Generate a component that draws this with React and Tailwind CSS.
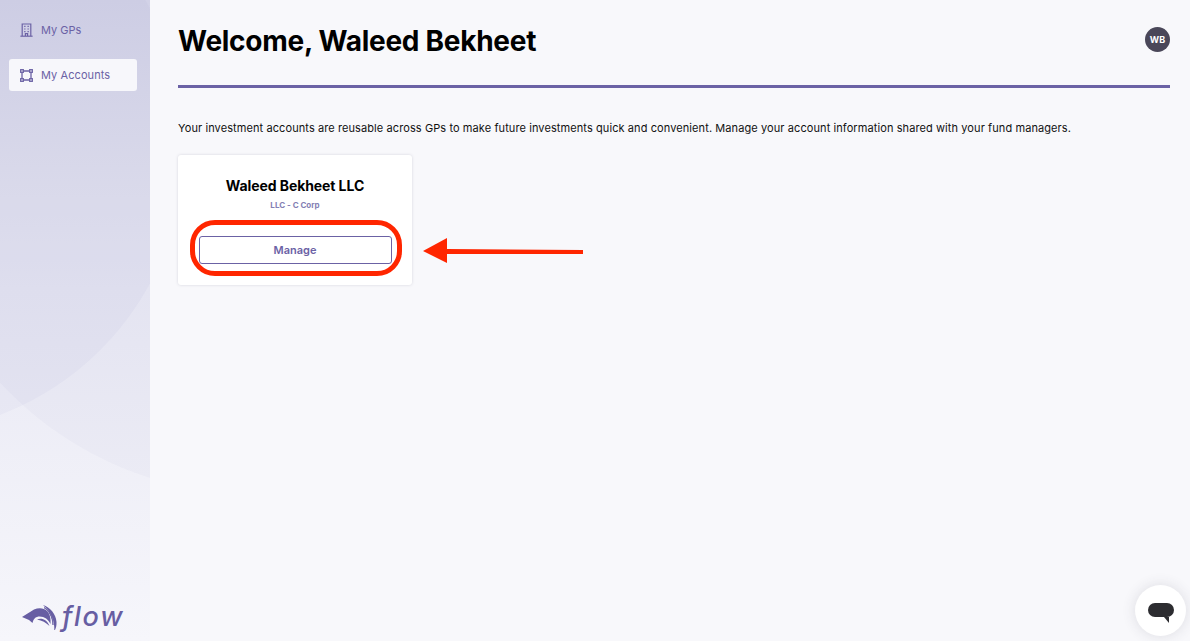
const inter = { fontFamily: '"Inter", "Liberation Sans", sans-serif' };

function BuildingIcon() {
  return (
    <svg width="13" height="14" viewBox="0 0 13 14" fill="none" stroke="#6b62a5" strokeWidth="1.2">
      <path d="M2.2 13V1h8.6v12" />
      <path d="M0.4 13.2h12.2" />
      <path d="M4.2 3.4h1.3M7.5 3.4h1.3M4.2 6h1.3M7.5 6h1.3M4.2 8.6h1.3M7.5 8.6h1.3" />
      <path d="M5.4 13v-2.4h2.2V13" />
    </svg>
  );
}

function AccountsIcon() {
  return (
    <svg width="13" height="13" viewBox="0 0 13 13" fill="none" stroke="#6b62a5" strokeWidth="1.3">
      <rect x="0.7" y="0.7" width="2.6" height="2.6" />
      <rect x="9.7" y="0.7" width="2.6" height="2.6" />
      <rect x="0.7" y="9.7" width="2.6" height="2.6" />
      <rect x="9.7" y="9.7" width="2.6" height="2.6" />
      <path d="M3.3 2h6.4M3.3 11h6.4M2 3.3v6.4M11 3.3v6.4" />
    </svg>
  );
}

function LogoMark() {
  return (
    <svg width="35" height="25" viewBox="0 0 35 25" fill="#675ea3">
      <path d="M0 12 L12 4.5 C17 2.5 22 3 25 6 C28 9 29 14 28.5 19 C26.5 14.5 22.5 11.5 17.5 11.5 C14 11.5 11.5 13.5 10.5 18 L7 15 Z" />
      <path d="M15 14.5 C20 12.5 25 15 27.5 21 C24 17.5 20 15.5 15 14.5 Z" />
      <path d="M21 0 C28 2 34 9 34.5 17 C34.7 20 34 23 33 25 L32.3 25 C32.8 16 29 7 21 0 Z" />
      <path d="M22 2.6 C27 5 31 11 31 20 C30.6 12 27 6 22 2.6 Z" stroke="#675ea3" strokeWidth="0.8" />
    </svg>
  );
}

export default function App() {
  return (
    <div className="flex h-[641px] w-[1190px] overflow-hidden bg-[#f8f8fb]" style={inter}>
      <aside className="relative flex h-full w-[150px] shrink-0 flex-col overflow-hidden bg-gradient-to-b from-[#d6d6ea] via-[#e9e9f4] via-45% to-[#f6f6fb] px-[9px] pt-[14px]">
        <div className="absolute left-[-391px] top-[-142px] h-[576px] w-[576px] rounded-full bg-[#565aa8]/[0.035]" />
        <div className="absolute left-[-91px] top-[-196px] h-[690px] w-[690px] rounded-full bg-[#565aa8]/[0.03]" />
        <div className="relative flex h-[32px] items-center gap-[8px] pl-[11px] text-[11px] text-[#6b62a5]">
          <BuildingIcon />
          <span>My GPs</span>
        </div>
        <div className="relative mt-[13px] flex h-[32px] w-[128px] items-center gap-[8px] rounded-[3px] bg-[#f7f7fb] pl-[11px] text-[11px] tracking-[0.08px] text-[#6b62a5]">
          <AccountsIcon />
          <span>My Accounts</span>
        </div>
        <div className="relative mt-auto mb-[11px] flex items-center gap-[5px] pl-[13px]">
          <LogoMark />
          <span className="text-[27px] leading-[26px] font-medium tracking-[1.7px] text-[#675ea3] italic">flow</span>
        </div>
      </aside>

      <main className="relative flex-1 pl-[28px] pr-[20px]">
        <header className="flex h-[85px] items-start justify-between pt-[22px]">
          <h1 className="text-[28px] leading-[38px] font-bold tracking-[-0.27px] text-black">Welcome, Waleed Bekheet</h1>
          <div className="mt-[5px] flex h-[25px] w-[25px] items-center justify-center rounded-full bg-[#4a4759] text-[9px] font-bold text-white">WB</div>
        </header>
        <div className="h-[3px] bg-[#6b62a5]" />
        <p className="mt-[32px] text-[11px] leading-[16px] tracking-[0.09px] whitespace-nowrap text-[#111]">
          Your investment accounts are reusable across GPs to make future investments quick and convenient. Manage your account information shared with your fund managers.
        </p>

        <div className="relative mt-[19px] flex h-[130px] w-[234px] flex-col items-center rounded-[3px] bg-white pt-[22px] shadow-[0_0_3px_rgba(60,60,90,0.18)]">
          <div className="text-[14px] leading-[18px] font-bold tracking-[-0.08px] text-black">Waleed Bekheet LLC</div>
          <div className="mt-[4px] text-[8px] leading-[12px] font-bold text-[#8480b4]">LLC - C Corp</div>
          <button className="mt-[25px] h-[28px] w-[193px] rounded-[3px] border border-[#6b62a5] bg-white text-[11px] font-semibold text-[#6b62a5]">Manage</button>
          <div className="absolute left-[12px] top-[65px] h-[56px] w-[212px] rounded-[25px] border-[5px] border-[#ff2600] blur-[0.4px]" />
        </div>

        <svg className="absolute left-[272px] top-[236px]" width="164" height="30" viewBox="0 0 164 30" fill="#ff2600">
          <path d="M1 15 L25 2 V13 L161 14 V18 L25 18 V27 Z" />
        </svg>

        <div className="absolute left-[985px] top-[585px] flex h-[51px] w-[51px] items-center justify-center rounded-full bg-white shadow-[0_0_14px_rgba(60,60,80,0.14)]">
          <svg className="mt-[5px]" width="26" height="21" viewBox="0 0 26 21" fill="#2c2c30">
            <rect x="0" y="0" width="26" height="14" rx="7" />
            <path d="M16 14 H21 V20 Z" />
          </svg>
        </div>
      </main>
    </div>
  );
}
